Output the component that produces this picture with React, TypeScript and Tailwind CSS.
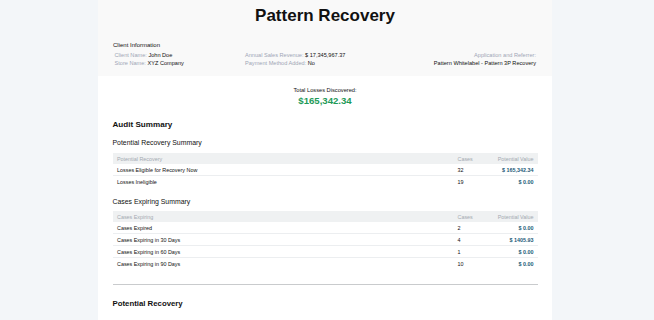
import React from "react";

const font = { fontFamily: '"Liberation Sans", Arial, Helvetica, sans-serif' };

function Table({
  head,
  rows,
}: {
  head: string;
  rows: { label: string; cases: string; value: string }[];
}) {
  return (
    <div className="w-full">
      <div className="grid grid-cols-[1fr_40px_44px] h-[11px] items-center bg-[#eff1f2] text-[5.4px] leading-[8px] text-[#a3a9b1]">
        <div className="pl-[4.5px]">{head}</div>
        <div className="pl-[4px]">Cases</div>
        <div className="text-right pr-[4px] whitespace-nowrap">Potential Value</div>
      </div>
      {rows.map((r, i) => (
        <div
          key={r.label}
          className={
            "grid grid-cols-[1fr_40px_44px] h-[12px] items-center text-[5.4px] leading-[8px] text-[#111] " +
            (i < rows.length - 1 ? "border-b border-[#eceef0]" : "")
          }
        >
          <div className="pl-[4.5px]">{r.label}</div>
          <div className="pl-[4px]">{r.cases}</div>
          <div className="text-right pr-[4px] font-bold text-[#1c5a77] whitespace-nowrap">{r.value}</div>
        </div>
      ))}
    </div>
  );
}

export default function App() {
  return (
    <div className="min-h-[320px] w-full bg-[#f3f6f9] flex" style={font}>
      <div className="ml-[98px] w-[454px] bg-white flex flex-col">
        {/* Header */}
        <div className="bg-[#f9f9f9] h-[76px] px-[15px] pt-[6px]">
          <div className="text-center text-[17px] leading-[20px] font-bold text-[#111]">Pattern Recovery</div>
          <div className="mt-[15px] text-[6px] leading-[8px] text-[#111]">Client Information</div>
          <div className="mt-[2px] flex text-[5.6px] leading-[8px]">
            <div className="pl-[1.5px] w-[132px]">
              <div>
                <span className="text-[#a0a6b6]">Client Name: </span>
                <span className="text-[#111]">John Doe</span>
              </div>
              <div>
                <span className="text-[#a0a6b6]">Store Name: </span>
                <span className="text-[#111]">XYZ Company</span>
              </div>
            </div>
            <div className="flex-1">
              <div>
                <span className="text-[#a0a6b6]">Annual Sales Revenue: </span>
                <span className="text-[#111]">$ 17,345,967.37</span>
              </div>
              <div>
                <span className="text-[#a0a6b6]">Payment Method Added: </span>
                <span className="text-[#111]">No</span>
              </div>
            </div>
            <div className="text-right pr-[1px]">
              <div className="text-[#a0a6b6]">Application and Referrer:</div>
              <div className="text-[#111]">Pattern Whitelabel - Pattern 3P Recovery</div>
            </div>
          </div>
        </div>

        {/* Body */}
        <div className="px-[14.5px] pt-[10px]">
          <div className="text-center text-[5.7px] leading-[8px] text-[#111]">Total Losses Discovered:</div>
          <div className="mt-[1px] text-center text-[9.6px] leading-[12px] font-bold text-[#1e9a58]">$165,342.34</div>

          <div className="mt-[13px] text-[8.1px] leading-[10px] font-bold text-[#111]">Audit Summary</div>
          <div className="mt-[8px] text-[6.9px] leading-[9px] text-[#111]">Potential Recovery Summary</div>
          <div className="mt-[6px]">
            <Table
              head="Potential Recovery"
              rows={[
                { label: "Losses Eligible for Recovery Now", cases: "32", value: "$ 165,342.34" },
                { label: "Losses Ineligible", cases: "19", value: "$ 0.00" },
              ]}
            />
          </div>
          <div className="mt-[9px] text-[6.9px] leading-[9px] text-[#111]">Cases Expiring Summary</div>
          <div className="mt-[5px]">
            <Table
              head="Cases Expiring"
              rows={[
                { label: "Cases Expired", cases: "2", value: "$ 0.00" },
                { label: "Cases Expiring in 30 Days", cases: "4", value: "$ 1405.93" },
                { label: "Cases Expiring in 60 Days", cases: "1", value: "$ 0.00" },
                { label: "Cases Expiring in 90 Days", cases: "10", value: "$ 0.00" },
              ]}
            />
          </div>
          <div className="mt-[14px] border-t border-[#c9cbcd]" />
          <div className="mt-[14px] text-[7.8px] leading-[10px] font-bold text-[#111]">Potential Recovery</div>
          <div className="h-[20px]" />
        </div>
      </div>
    </div>
  );
}
